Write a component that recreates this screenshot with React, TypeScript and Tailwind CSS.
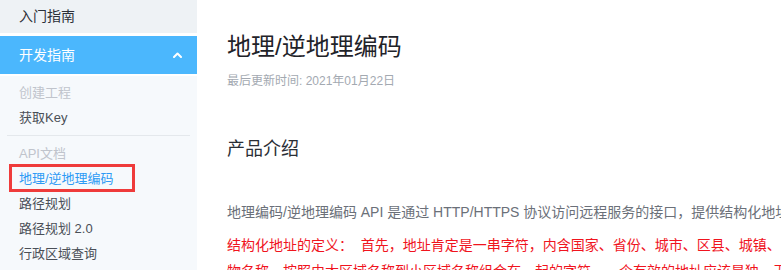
import { ReactNode } from "react";

const font = { fontFamily: '"Liberation Sans", "Noto Sans CJK SC", sans-serif' };

function SubItem({ children, muted, active }: { children: ReactNode; muted?: boolean; active?: boolean }) {
  return (
    <div
      className={`h-[25px] leading-[25px] text-[13px] pl-[19px] ${
        muted ? "text-[#c0c4cc]" : active ? "text-[#2e9bf5]" : "text-[#4a4f57]"
      }`}
    >
      {children}
    </div>
  );
}

export default function App() {
  return (
    <div className="w-screen h-screen overflow-hidden bg-white" style={font}>
      <div className="flex w-[1100px] h-[270px]">
        {/* Sidebar */}
        <aside className="w-[197px] shrink-0 flex flex-col bg-white">
          <div className="h-[33px] bg-[#eef2f5] pl-[19px] flex items-center text-[14px] text-[#2c3038]">
            入门指南
          </div>
          <div className="mt-[3px] h-[38px] bg-[#4bb7fd] pl-[19px] pr-[15px] flex items-center justify-between text-[14px] text-white">
            <span>开发指南</span>
            <svg width="9" height="6" viewBox="0 0 9 6" fill="none">
              <path d="M1 5L4.5 1.5L8 5" stroke="white" strokeWidth="2" strokeLinecap="round" strokeLinejoin="round" />
            </svg>
          </div>
          <div className="mt-[2px] flex-1 bg-[#f6f9fc] pt-[4px]">
            <SubItem muted>创建工程</SubItem>
            <SubItem>获取Key</SubItem>
            <div className="mx-[7px] my-[5px] h-px bg-[#e4e8ec]" />
            <SubItem muted>API文档</SubItem>
            <div className="relative">
              <SubItem active>地理/逆地理编码</SubItem>
              <div className="absolute left-[9px] top-[-2px] w-[126px] h-[28px] border-[3px] border-[#ef3b3b]" />
            </div>
            <SubItem>路径规划</SubItem>
            <SubItem>路径规划 2.0</SubItem>
            <SubItem>行政区域查询</SubItem>
          </div>
        </aside>

        {/* Main content */}
        <main className="flex-1 pl-[30px] pt-[30px]">
          <div className="w-[830px]">
            <h1 className="text-[24px] leading-[34px] text-[#1f2329]">地理/逆地理编码</h1>
            <p className="mt-[8px] text-[12px] leading-[18px] text-[#a3a9b1]">最后更新时间: 2021年01月22日</p>
            <h2 className="mt-[46px] text-[18px] leading-[26px] text-[#2a2e35]">产品介绍</h2>
            <p className="mt-[39px] text-[14px] leading-[22px] text-[#6b7079]">
              地理编码/逆地理编码 API 是通过 HTTP/HTTPS 协议访问远程服务的接口，提供结构化地址与经纬度之间的相互转化的能力。
            </p>
            <p className="mt-[9px] text-[14px] leading-[26px] text-[#f0141e]">
              结构化地址的定义：&nbsp; 首先，地址肯定是一串字符，内含国家、省份、城市、区县、城镇、乡村、街道、门牌号码、屋邨、大厦等建筑物名称，按照由大区域名称到小区域名称组合在一起的字符。一个有效的地址应该是独一无二的。
            </p>
          </div>
        </main>
      </div>
    </div>
  );
}
